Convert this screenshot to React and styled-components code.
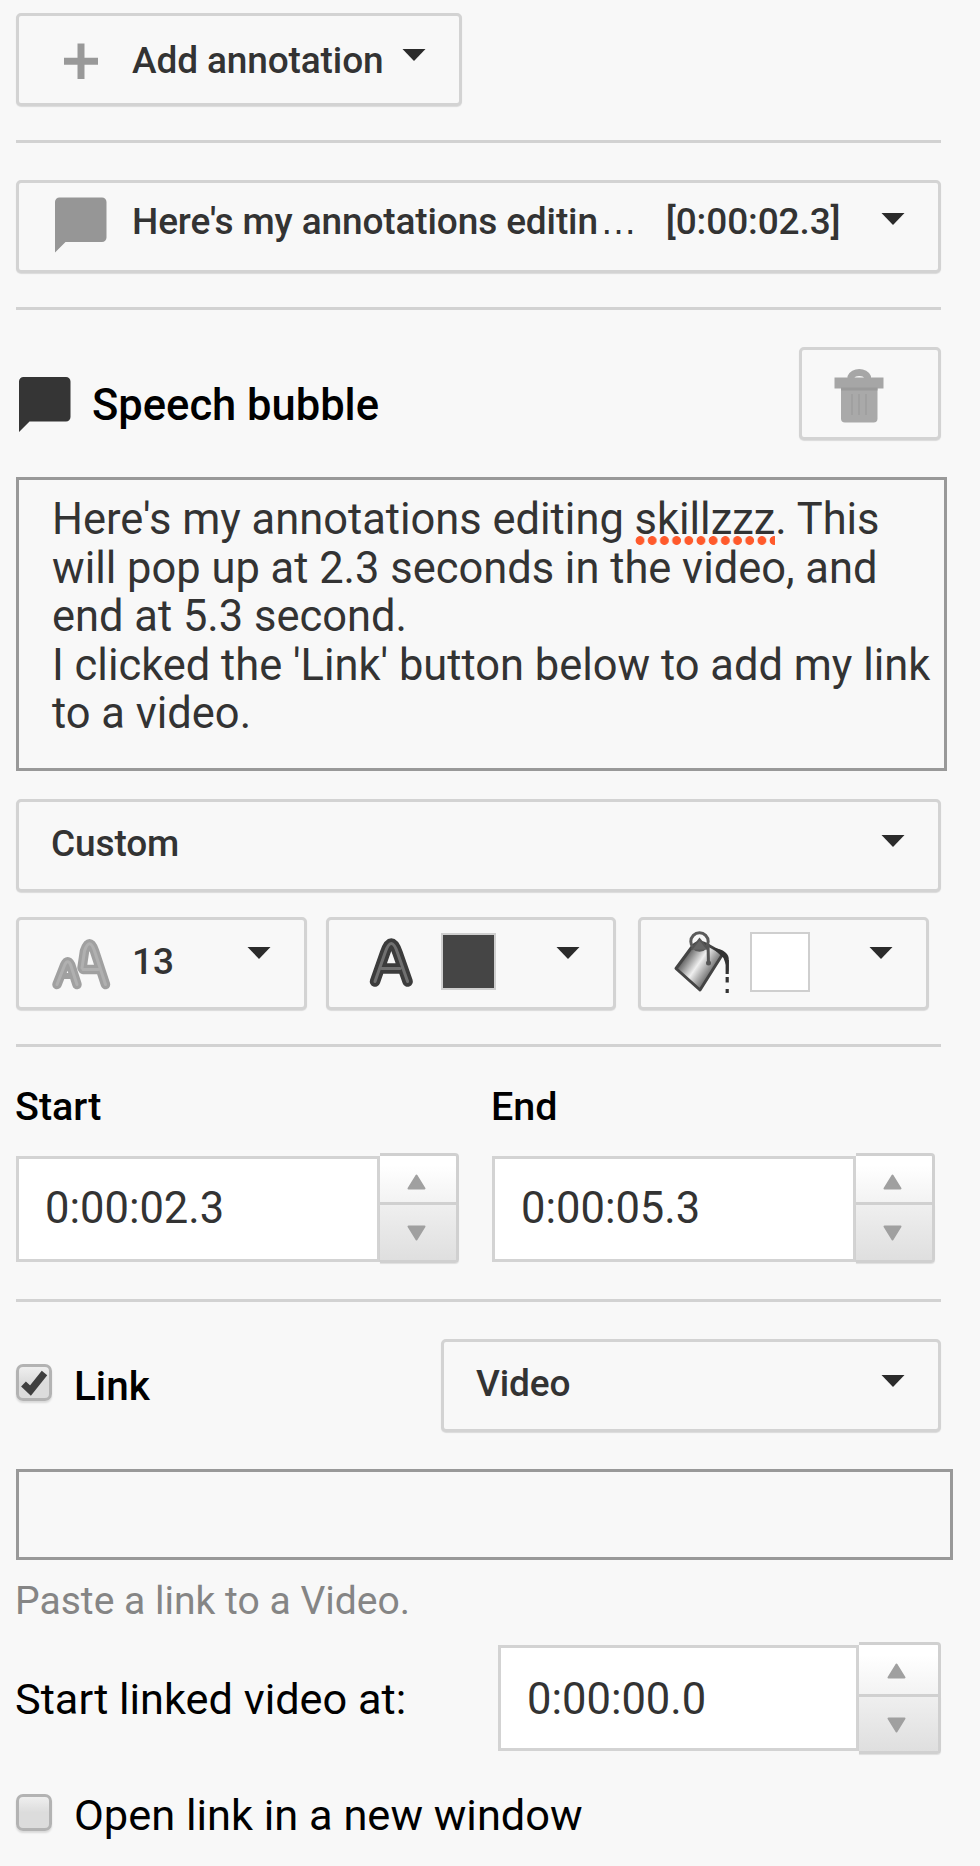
import { useState } from 'react';
import styled, { createGlobalStyle } from 'styled-components';

const GlobalStyle = createGlobalStyle`
  body {
    margin: 0;
    background: #f8f8f8;
    font-family: Roboto, 'Liberation Sans', sans-serif;
  }
`;

const Panel = styled.main`
  box-sizing: border-box;
  width: 980px;
  height: 1866px;
  padding: 13px 0 0 16px;
  overflow: hidden;
  background: #f8f8f8;
`;

const Divider = styled.hr`
  width: 925px;
  height: 3px;
  margin: 34px 0 37px;
  border: none;
  background: #d2d2d2;
`;

const Row = styled.div`
  display: flex;
  width: 925px;
  margin-top: ${(props) => props.$top || 0}px;
  align-items: ${(props) => props.$align || 'center'};
  justify-content: ${(props) => (props.$spread ? 'space-between' : 'flex-start')};
`;

const Button = styled.button`
  box-sizing: border-box;
  display: flex;
  align-items: flex-start;
  width: ${(props) => props.$width || 925}px;
  height: 93px;
  margin: ${(props) => props.$top || 0}px 0 0;
  padding: 0 33px 0 32px;
  border: 3px solid #d3d3d3;
  border-radius: 5px;
  background: #f8f8f8;
  box-shadow: 0 1px 1px rgba(0, 0, 0, 0.12);
  color: #333;
  font: 500 37px/44px Roboto, 'Liberation Sans', sans-serif;
  letter-spacing: -0.12px;
  text-align: left;
`;

const ButtonText = styled.span`
  margin-top: ${(props) => props.$top ?? 20}px;
  white-space: nowrap;
`;

const Ellipsis = styled.span`
  margin-left: 2px;
  font-family: 'Liberation Sans', sans-serif;
  font-weight: 400;
`;

const Timestamp = styled(ButtonText)`
  margin-left: 29px;
`;

const CaretIcon = styled.svg`
  flex: none;
  width: 24px;
  height: 12px;
  margin-top: ${(props) => props.$top ?? 33}px;
  margin-left: auto;
`;

const IconSlot = styled.svg`
  flex: none;
  width: ${(props) => props.$width || 80}px;
  height: 87px;
  margin-left: 1px;
  overflow: visible;
`;

const Swatch = styled.span`
  box-sizing: border-box;
  width: ${(props) => props.$size}px;
  height: ${(props) => props.$size + (props.$tall || 0)}px;
  margin-top: ${(props) => props.$top}px;
  border: 2px solid #cfcfcf;
  background: ${(props) => props.$color};
`;

const Title = styled.h2`
  display: flex;
  align-items: center;
  margin: 0;
  padding-top: 30px;
  font-size: 43.5px;
  line-height: 50px;
  font-weight: 500;
  color: #000;

  > svg {
    width: 52px;
    height: 55px;
    margin: 0 21px 2px 3px;
  }
`;

const NoteBox = styled.div`
  box-sizing: border-box;
  width: 931px;
  height: 294px;
  margin-top: 37px;
  padding: 16px 0 0 33px;
  border: 3px solid #999;
  color: #333;
  font-size: 43.45px;
  line-height: 48.6px;
  white-space: nowrap;
`;

const Misspelled = styled.span`
  background: radial-gradient(circle at 5px 4.5px, #ff5a2c 4px, transparent 4.8px) repeat-x 0
    100% / 12.2px 9px;
`;

const FormatRow = styled.div`
  display: grid;
  grid-template-columns: 310px 312px 291px;
  margin-top: 25px;
`;

const TimeColumn = styled.div`
  flex: none;
  width: 476px;
`;

const TimeLabel = styled.label`
  display: block;
  margin: 1px 0 24px -1px;
  font-size: 39.5px;
  line-height: 44px;
  font-weight: 500;
  color: #000;
`;

const TimeField = styled.div`
  display: flex;
  align-items: flex-start;
  height: 112px;
`;

const TimeInput = styled.input`
  box-sizing: border-box;
  width: ${(props) => props.$width}px;
  height: 106px;
  margin: 3px 0 0;
  padding: ${(props) => (props.$low ? '2px 0 0 26px' : '0 0 2px 26px')};
  border: 3px solid #d3d3d3;
  border-radius: 0;
  background: #fff;
  color: #333;
  font: 400 43.5px Roboto, 'Liberation Sans', sans-serif;
  outline: none;
`;

const Stepper = styled.div`
  width: ${(props) => props.$width}px;
`;

const StepButton = styled.button`
  box-sizing: border-box;
  display: flex;
  align-items: flex-start;
  justify-content: center;
  width: 100%;
  height: ${(props) => props.$height}px;
  margin: 0;
  padding: ${(props) => (props.$down ? 20 : 18)}px 4px 0 0;
  border: solid #d0d0d0;
  border-width: ${(props) => (props.$down ? '0 3px 3px 0' : '3px 3px 3px 0')};
  border-radius: ${(props) => (props.$down ? '0 0 4px 0' : '0 4px 0 0')};
  background: ${(props) =>
    props.$down
      ? 'linear-gradient(#efefef, #dfdfdf)'
      : 'linear-gradient(#fff 20%, #f3f3f3)'};
  box-shadow: ${(props) => (props.$down ? '0 1px 1px rgba(0, 0, 0, 0.1)' : 'none')};

  > svg {
    width: 19px;
    height: 16px;
    transform: ${(props) => (props.$down ? 'rotate(180deg)' : 'none')};
  }
`;

const CheckLabel = styled.label`
  display: flex;
  align-items: center;
  height: 38px;
  margin-top: ${(props) => props.$top || 0}px;
  color: #000;
  font-size: ${(props) => (props.$strong ? 40.5 : 43.4)}px;
  font-weight: ${(props) => (props.$strong ? 500 : 400)};
  line-height: 50px;
  white-space: nowrap;

  > span {
    margin: 8px 0 0 22px;
  }
`;

const CheckBox = styled.button`
  box-sizing: border-box;
  width: 36px;
  height: 37px;
  padding: 0;
  border: 3px solid #b3b3b3;
  border-radius: 7px;
  background: linear-gradient(#efefef, #dcdcdc 50%);
  box-shadow: 0 2px 2px rgba(0, 0, 0, 0.12);
  line-height: 0;

  > svg {
    width: 30px;
    height: 31px;
    overflow: visible;
  }
`;

const LinkInput = styled.input`
  box-sizing: border-box;
  display: block;
  width: 937px;
  height: 91px;
  margin: 37px 0 0;
  border: 3px solid #999;
  border-radius: 0;
  background: #f8f8f8;
  font: 400 43.5px Roboto, sans-serif;
  outline: none;
`;

const Hint = styled.p`
  margin: 19px 0 18px -1px;
  color: #858585;
  font-size: 39.1px;
  line-height: 45px;
`;

const StartAt = styled.span`
  width: 483px;
  margin: 4px 0 0 -1px;
  color: #000;
  font-size: 43.3px;
  line-height: 50px;
`;

const Caret = ({ top }) => (
  <CaretIcon $top={top} viewBox='0 0 24 12'>
    <path d='M0.5 0h23L12 12z' fill='#2b2b2b' />
  </CaretIcon>
);

const Bubble = ({ fill }) => (
  <path
    d='M4.5 0H47a4.5 4.5 0 0 1 4.5 4.5V40a4.5 4.5 0 0 1-4.5 4.5H10.5L0 55V4.5A4.5 4.5 0 0 1 4.5 0z'
    fill={fill}
  />
);

const PlusIcon = () => (
  <IconSlot viewBox='0 0 80 87'>
    <path d='M12 45.2h34M29 27.5v35.5' stroke='#999' strokeWidth='7' />
  </IconSlot>
);

const TrashIcon = () => (
  <IconSlot $width={50} viewBox='1 0 50 87'>
    <path d='M17 29v-2a8.5 6 0 0 1 16.5 0V29' fill='none' stroke='#a6a6a6' strokeWidth='7' />
    <path d='M7 36h36.5v32.5a4 4 0 0 1-4 4h-28.5a4 4 0 0 1-4-4z' fill='#a9a9a9' />
    <path d='M0.5 27.5h49v11h-49z' fill='#a6a6a6' />
    <path d='M7 37.5h36.5v3h-36.5z' fill='#9a9a9a' />
    <path d='M18 44v21M25 44v21M32 44v21' stroke='#a0a0a0' strokeWidth='2' />
  </IconSlot>
);

// two letters of different height, for the font size menu
const FontSizeIcon = () => {
  const small = 'M5 64.5L12.7 45Q15.7 38.500 18.7 45L25 64.5';
  const big = 'M30 48L32.500 31Q37.500 16.500 42.500 31L53.500 64.500M31 49.500H46';
  return (
    <IconSlot viewBox='0 0 80 87' fill='none' strokeLinecap='round' strokeLinejoin='round'>
      <path d={small} stroke='#a0a0a0' strokeWidth='9.5' />
      <path d='M12 56h7' stroke='#a0a0a0' strokeWidth='6' />
      <path d={big} stroke='#a0a0a0' strokeWidth='9.5' />
      <path d={small} stroke='#b0b0b0' strokeWidth='3' />
      <path d={big} stroke='#b0b0b0' strokeWidth='3' />
    </IconSlot>
  );
};

const FontColorIcon = () => {
  const shape = 'M13 61.5L23 33Q29.3 14 35.600 33L45.600 61.5M20 48.5H38';
  return (
    <IconSlot $width={79} viewBox='0 0 79 87' fill='none' strokeLinecap='round'>
      <path d={shape} stroke='#3c3c3c' strokeWidth='10.5' />
      <path d={shape} stroke='#707070' strokeWidth='3' />
    </IconSlot>
  );
};

const BucketIcon = () => (
  <IconSlot $width={76} viewBox='0 0 76 87' fill='none'>
    <defs>
      <linearGradient id='metal' x1='0.1' y1='0.3' x2='0.75' y2='0.75'>
        <stop offset='0' stopColor='#3f3f3f' />
        <stop offset='0.5' stopColor='#efefef' />
        <stop offset='1' stopColor='#555' />
      </linearGradient>
    </defs>
    <path
      d='M2 48.5L19 25.5Q25 20 33 24.5L49 33.5L26 70z'
      fill='url(#metal)'
      stroke='#444'
      strokeWidth='3'
      strokeLinejoin='round'
    />
    <circle cx='25.5' cy='21.5' r='8.7' stroke='#5b5b5b' strokeWidth='3' />
    <path d='M17.5 29.5L25.5 19L34 29.5' fill='#666' stroke='#555' strokeWidth='2' />
    <path d='M34 24L34.5 44' stroke='#555' strokeWidth='3' />
    <circle cx='34.5' cy='43' r='2.5' fill='#555' />
    <path d='M38 27.5Q56 30 54.8 41L54.5 52L49.5 38z' fill='#333' />
    <path d='M53.2 40v14M53.2 57v5.5M53.2 69v4' stroke='#333' strokeWidth='3.2' />
  </IconSlot>
);

const StepArrow = () => (
  <svg viewBox='0 0 19 16'>
    <path d='M9.5 1.5L17.5 14.5H1.5z' fill='#a0a0a0' stroke='#a0a0a0' strokeWidth='2' strokeLinejoin='round' />
  </svg>
);

const TimePicker = ({ initial, inputWidth = 364, stepWidth = 79, upHeight = 52, downHeight = 58, low }) => {
  const [value, setValue] = useState(initial);

  return (
    <TimeField>
      <TimeInput $width={inputWidth} $low={low} value={value} onChange={(e) => setValue(e.target.value)} />
      <Stepper $width={stepWidth}>
        <StepButton $height={upHeight}>
          <StepArrow />
        </StepButton>
        <StepButton $down $height={downHeight}>
          <StepArrow />
        </StepButton>
      </Stepper>
    </TimeField>
  );
};

const Check = ({ initial = false, strong, top, children }) => {
  const [checked, setChecked] = useState(initial);

  return (
    <CheckLabel $strong={strong} $top={top}>
      <CheckBox onClick={() => setChecked((state) => !state)}>
        {checked && (
          <svg viewBox='0 0 30 31'>
            <path d='M4.5 17L11.5 23.5L25.5 6' fill='none' stroke='#404040' strokeWidth='7' />
          </svg>
        )}
      </CheckBox>
      <span>{children}</span>
    </CheckLabel>
  );
};

export default function App() {
  return (
    <>
      <GlobalStyle />
      <Panel>
        <Button $width={446}>
          <PlusIcon />
          <ButtonText $top={23}>Add annotation</ButtonText>
          <Caret />
        </Button>
        <Divider />
        <Button>
          <IconSlot viewBox='0 0 80 87'>
            <g transform='translate(3 14.5)'>
              <Bubble fill='#969696' />
            </g>
          </IconSlot>
          <ButtonText $top={17}>
            Here's my annotations editin<Ellipsis>…</Ellipsis>
          </ButtonText>
          <Timestamp $top={17}>[0:00:02.3]</Timestamp>
          <Caret top={30} />
        </Button>
        <Divider />
        <Row $spread $align='flex-start'>
          <Title>
            <svg viewBox='0 0 52 55'>
              <Bubble fill='#353535' />
            </svg>
            Speech bubble
          </Title>
          <Button $width={142}>
            <TrashIcon />
          </Button>
        </Row>
        <NoteBox>
          Here's my annotations editing <Misspelled>skillzzz</Misspelled>. This
          <br />
          will pop up at 2.3 seconds in the video, and
          <br />
          end at 5.3 second.
          <br />
          I clicked the 'Link' button below to add my link
          <br />
          to a video.
        </NoteBox>
        <Button $top={28}>
          <ButtonText>Custom</ButtonText>
          <Caret />
        </Button>
        <FormatRow>
          <Button $width={291}>
            <FontSizeIcon />
            <ButtonText>13</ButtonText>
            <Caret top={27} />
          </Button>
          <Button $width={290}>
            <FontColorIcon />
            <Swatch $size={55} $tall={2} $top={13} $color='#454545' />
            <Caret top={27} />
          </Button>
          <Button $width={291}>
            <BucketIcon />
            <Swatch $size={60} $top={12} $color='#fff' />
            <Caret top={27} />
          </Button>
        </FormatRow>
        <Divider />
        <Row>
          <TimeColumn>
            <TimeLabel>Start</TimeLabel>
            <TimePicker initial='0:00:02.3' />
          </TimeColumn>
          <TimeColumn>
            <TimeLabel>End</TimeLabel>
            <TimePicker initial='0:00:05.3' />
          </TimeColumn>
        </Row>
        <Divider />
        <Row $spread $align='flex-start'>
          <Check initial strong top={24}>
            Link
          </Check>
          <Button $width={500}>
            <ButtonText>Video</ButtonText>
            <Caret />
          </Button>
        </Row>
        <LinkInput />
        <Hint>Paste a link to a Video.</Hint>
        <Row>
          <StartAt>Start linked video at:</StartAt>
          <TimePicker initial='0:00:00.0' inputWidth={361} stepWidth={82} upHeight={55} downHeight={57} low />
        </Row>
        <Row $top={39}>
          <Check>Open link in a new window</Check>
        </Row>
      </Panel>
    </>
  );
}
